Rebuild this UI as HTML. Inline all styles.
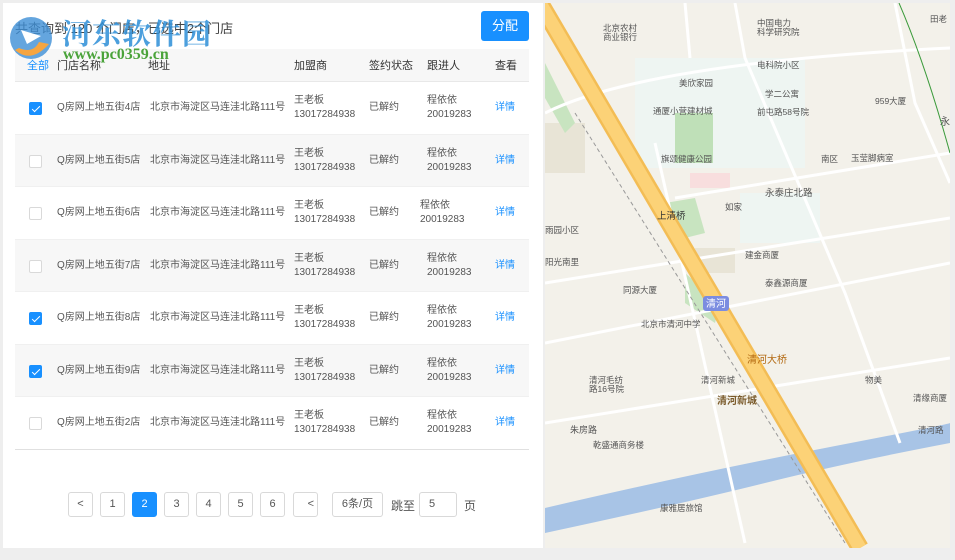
<!DOCTYPE html><html><head><meta charset="utf-8"><style>
*{margin:0;padding:0;box-sizing:border-box}
body{width:955px;height:560px;background:#eeeeee;font-family:"Liberation Sans","Noto Sans CJK SC",sans-serif;position:relative;overflow:hidden;color:#555}
.panel{position:absolute;left:3px;top:3px;width:540px;height:545px;background:#fff}
.top{position:absolute;left:15px;top:18px;font-size:13px;color:#444}
.btn{position:absolute;left:481px;top:11px;width:48px;height:30px;background:#1890ff;color:#fff;border-radius:3px;font-size:13px;text-align:center;line-height:30px}
.hdr{position:absolute;left:15px;top:49px;width:514px;height:33px;background:#f7f7f7;border-bottom:1px solid #e8e8e8;font-size:11px;color:#333}
.row{position:absolute;left:15px;width:514px;height:52.5px;font-size:10px;color:#555;border-bottom:1px solid #f0f0f0}
.row.g{background:#f7f7f7}
.c{position:absolute;line-height:14px}
.cb{position:absolute;left:14px;width:13px;height:13px;border:1px solid #d9d9d9;border-radius:2px;background:#fff}
.cb.on{background:#1890ff;border-color:#1890ff}
.cb.on:after{content:"";position:absolute;left:3.5px;top:1px;width:3px;height:7px;border:solid #fff;border-width:0 1.5px 1.5px 0;transform:rotate(45deg)}
.pg{position:absolute;top:492px;height:25px;border:1px solid #d9d9d9;border-radius:3px;font-size:11px;text-align:center;line-height:23px;color:#555;background:#fff}
.wm1{position:absolute;left:62px;top:12px;font-size:29px;font-weight:bold;color:#2d8fd8;opacity:.85;letter-spacing:1px;font-family:"Noto Serif CJK SC",serif}
.wm2{position:absolute;left:63px;top:46px;font-size:16px;font-weight:bold;color:#4aa33a;font-family:"Liberation Serif",serif}
</style></head><body>
<div class="panel"></div>
<div class="top">共查询到 120 个门店，已选中2个门店</div>
<div class="btn">分配</div>
<div class="hdr">
<span class="c" style="left:12px;top:10px;color:#1890ff">全部</span>
<span class="c" style="left:42px;top:10px">门店名称</span>
<span class="c" style="left:133px;top:10px">地址</span>
<span class="c" style="left:279px;top:10px">加盟商</span>
<span class="c" style="left:354px;top:10px">签约状态</span>
<span class="c" style="left:412px;top:10px">跟进人</span>
<span class="c" style="left:480px;top:10px">查看</span>
</div>
<div class="row" style="top:82px"><div class="cb on" style="top:20px"></div><span class="c" style="left:42px;top:19px">Q房网上地五街4店</span><span class="c" style="left:135px;top:19px">北京市海淀区马连洼北路111号</span><span class="c" style="left:279px;top:12px">王老板<br>13017284938</span><span class="c" style="left:354px;top:19px">已解约</span><span class="c" style="left:412px;top:12px">程依依<br>20019283</span><span class="c" style="left:480px;top:19px;color:#1890ff">详情</span></div>
<div class="row g" style="top:134.5px"><div class="cb" style="top:20px"></div><span class="c" style="left:42px;top:19px">Q房网上地五街5店</span><span class="c" style="left:135px;top:19px">北京市海淀区马连洼北路111号</span><span class="c" style="left:279px;top:12px">王老板<br>13017284938</span><span class="c" style="left:354px;top:19px">已解约</span><span class="c" style="left:412px;top:12px">程依依<br>20019283</span><span class="c" style="left:480px;top:19px;color:#1890ff">详情</span></div>
<div class="row" style="top:187px"><div class="cb" style="top:20px"></div><span class="c" style="left:42px;top:19px">Q房网上地五街6店</span><span class="c" style="left:135px;top:19px">北京市海淀区马连洼北路111号</span><span class="c" style="left:279px;top:12px">王老板<br>13017284938</span><span class="c" style="left:354px;top:19px">已解约</span><span class="c" style="left:405px;top:12px">程依依<br>20019283</span><span class="c" style="left:480px;top:19px;color:#1890ff">详情</span></div>
<div class="row g" style="top:239.5px"><div class="cb" style="top:20px"></div><span class="c" style="left:42px;top:19px">Q房网上地五街7店</span><span class="c" style="left:135px;top:19px">北京市海淀区马连洼北路111号</span><span class="c" style="left:279px;top:12px">王老板<br>13017284938</span><span class="c" style="left:354px;top:19px">已解约</span><span class="c" style="left:412px;top:12px">程依依<br>20019283</span><span class="c" style="left:480px;top:19px;color:#1890ff">详情</span></div>
<div class="row" style="top:292px"><div class="cb on" style="top:20px"></div><span class="c" style="left:42px;top:19px">Q房网上地五街8店</span><span class="c" style="left:135px;top:19px">北京市海淀区马连洼北路111号</span><span class="c" style="left:279px;top:12px">王老板<br>13017284938</span><span class="c" style="left:354px;top:19px">已解约</span><span class="c" style="left:412px;top:12px">程依依<br>20019283</span><span class="c" style="left:480px;top:19px;color:#1890ff">详情</span></div>
<div class="row g" style="top:344.5px"><div class="cb on" style="top:20px"></div><span class="c" style="left:42px;top:19px">Q房网上地五街9店</span><span class="c" style="left:135px;top:19px">北京市海淀区马连洼北路111号</span><span class="c" style="left:279px;top:12px">王老板<br>13017284938</span><span class="c" style="left:354px;top:19px">已解约</span><span class="c" style="left:412px;top:12px">程依依<br>20019283</span><span class="c" style="left:480px;top:19px;color:#1890ff">详情</span></div>
<div class="row" style="top:397px;border-bottom:1px solid #e0e0e0"><div class="cb" style="top:20px"></div><span class="c" style="left:42px;top:19px">Q房网上地五街2店</span><span class="c" style="left:135px;top:19px">北京市海淀区马连洼北路111号</span><span class="c" style="left:279px;top:12px">王老板<br>13017284938</span><span class="c" style="left:354px;top:19px">已解约</span><span class="c" style="left:412px;top:12px">程依依<br>20019283</span><span class="c" style="left:480px;top:19px;color:#1890ff">详情</span></div>
<div class="pg" style="left:68px;width:25px">&lt;</div>
<div class="pg" style="left:100px;width:25px">1</div>
<div class="pg" style="left:132px;width:25px;background:#1890ff;border-color:#1890ff;color:#fff">2</div>
<div class="pg" style="left:164px;width:25px">3</div>
<div class="pg" style="left:196px;width:25px">4</div>
<div class="pg" style="left:228px;width:25px">5</div>
<div class="pg" style="left:260px;width:25px">6</div>
<div class="pg" style="left:293px;width:25px;text-align:right;padding-right:3px">&lt;</div>
<div class="pg" style="left:332px;width:51px">6条/页</div>
<div style="position:absolute;left:391px;top:497px;font-size:12px;color:#555">跳至</div>
<div class="pg" style="left:419px;width:38px;text-align:left;padding-left:9px">5</div>
<div style="position:absolute;left:464px;top:497px;font-size:12px;color:#555">页</div>
<svg style="position:absolute;left:545px;top:3px" width="405" height="545" viewBox="0 0 405 545" font-family="Liberation Sans,Noto Sans CJK SC,sans-serif" font-size="8.5" fill="#555">
<rect width="405" height="545" fill="#f3f1ea"/>
<rect x="90" y="55" width="170" height="110" fill="#eef5f2"/>
<rect x="130" y="110" width="38" height="50" fill="#bfe0b8"/>
<rect x="195" y="190" width="80" height="50" fill="#eef5f2"/>
<rect x="0" y="120" width="40" height="50" fill="#e8e4d6"/>
<rect x="150" y="245" width="40" height="25" fill="#e8e4d6"/>
<rect x="145" y="170" width="40" height="15" fill="#f8dede"/>
<path d="M0 60 L30 120 L20 130 L0 95Z" fill="#c8e4c0"/>
<path d="M120 200 L150 195 L160 230 L140 235Z" fill="#c8e4c0"/>
<path d="M140 270 L175 300 L170 320 L140 300Z" fill="#c8e4c0"/>
<path d="M0 505 Q150 470 280 445 T405 420 L405 440 Q300 460 220 480 T0 530Z" fill="#a8c4e6"/>
<g stroke="#fff" stroke-width="3" fill="none">
<path d="M0 110 Q100 60 405 45"/><path d="M140 0 L145 55"/><path d="M190 0 L200 55 L300 290 L355 440"/>
<path d="M130 195 L405 150"/><path d="M0 280 L405 215"/><path d="M0 340 L405 260"/>
<path d="M0 420 L405 355"/><path d="M110 140 L200 540"/><path d="M350 0 L370 100 L405 180"/>
</g>
<path d="M-5 0 L315 545" stroke="#f3bd55" stroke-width="18"/>
<path d="M-5 0 L315 545" stroke="#fcd277" stroke-width="13"/>
<path d="M30 110 L300 540" stroke="#999" stroke-width="1" stroke-dasharray="4 3"/>
<path d="M354 0 Q380 60 405 150" stroke="#3a9a3a" stroke-width="1" fill="none"/>
<text x="58" y="28">北京农村</text><text x="58" y="37">商业银行</text>
<text x="212" y="23">中国电力</text><text x="212" y="32">科学研究院</text>
<text x="212" y="65">电科院小区</text><text x="134" y="83">美欣家园</text>
<text x="220" y="94">学二公寓</text><text x="212" y="112">前屯路58号院</text>
<text x="330" y="101">959大厦</text><text x="108" y="111">通厦小营建材城</text>
<text x="116" y="159">旗颂健康公园</text><text x="276" y="159">南区</text><text x="306" y="158">玉莹脚病室</text>
<text x="220" y="193" font-size="9.5">永泰庄北路</text><text x="180" y="207">如家</text>
<text x="112" y="216" font-size="9.5" fill="#333">上清桥</text><text x="0" y="230">雨园小区</text>
<text x="0" y="262">阳光南里</text><text x="200" y="255">建金商厦</text><text x="220" y="283">泰鑫源商厦</text>
<text x="78" y="290">同源大厦</text><rect x="158" y="293" width="26" height="15" rx="3" fill="#7b8ce0"/><text x="161" y="304" fill="#fff" font-size="10">清河</text>
<text x="96" y="324">北京市清河中学</text><text x="202" y="360" font-size="10" fill="#b36a12">清河大桥</text>
<text x="44" y="380">清河毛纺</text><text x="44" y="389">路16号院</text><text x="156" y="380">清河新城</text>
<text x="172" y="401" font-size="10" font-weight="bold" fill="#7a5a2a">清河新城</text><text x="320" y="380">物美</text>
<text x="368" y="398">清缘商厦</text><text x="373" y="430">清河路</text>
<text x="25" y="430" font-size="9">朱房路</text><text x="48" y="445">乾盛通商务楼</text><text x="115" y="508">康雅居旅馆</text>
<text x="385" y="19">田老</text><text x="395" y="122" font-size="10">永</text>
</svg>
<div class="wm1">河东软件园</div>
<div class="wm2">www.pc0359.cn</div>
<svg style="position:absolute;left:5px;top:14px" width="58" height="48"><circle cx="26" cy="24" r="21" fill="#3d8fd6" opacity=".8"/><path d="M10 36 Q26 50 44 30 L34 28 Q28 40 14 34Z" fill="#f6a540"/><path d="M16 16 L36 22 L22 30Z" fill="#fff"/></svg>
</body></html>
